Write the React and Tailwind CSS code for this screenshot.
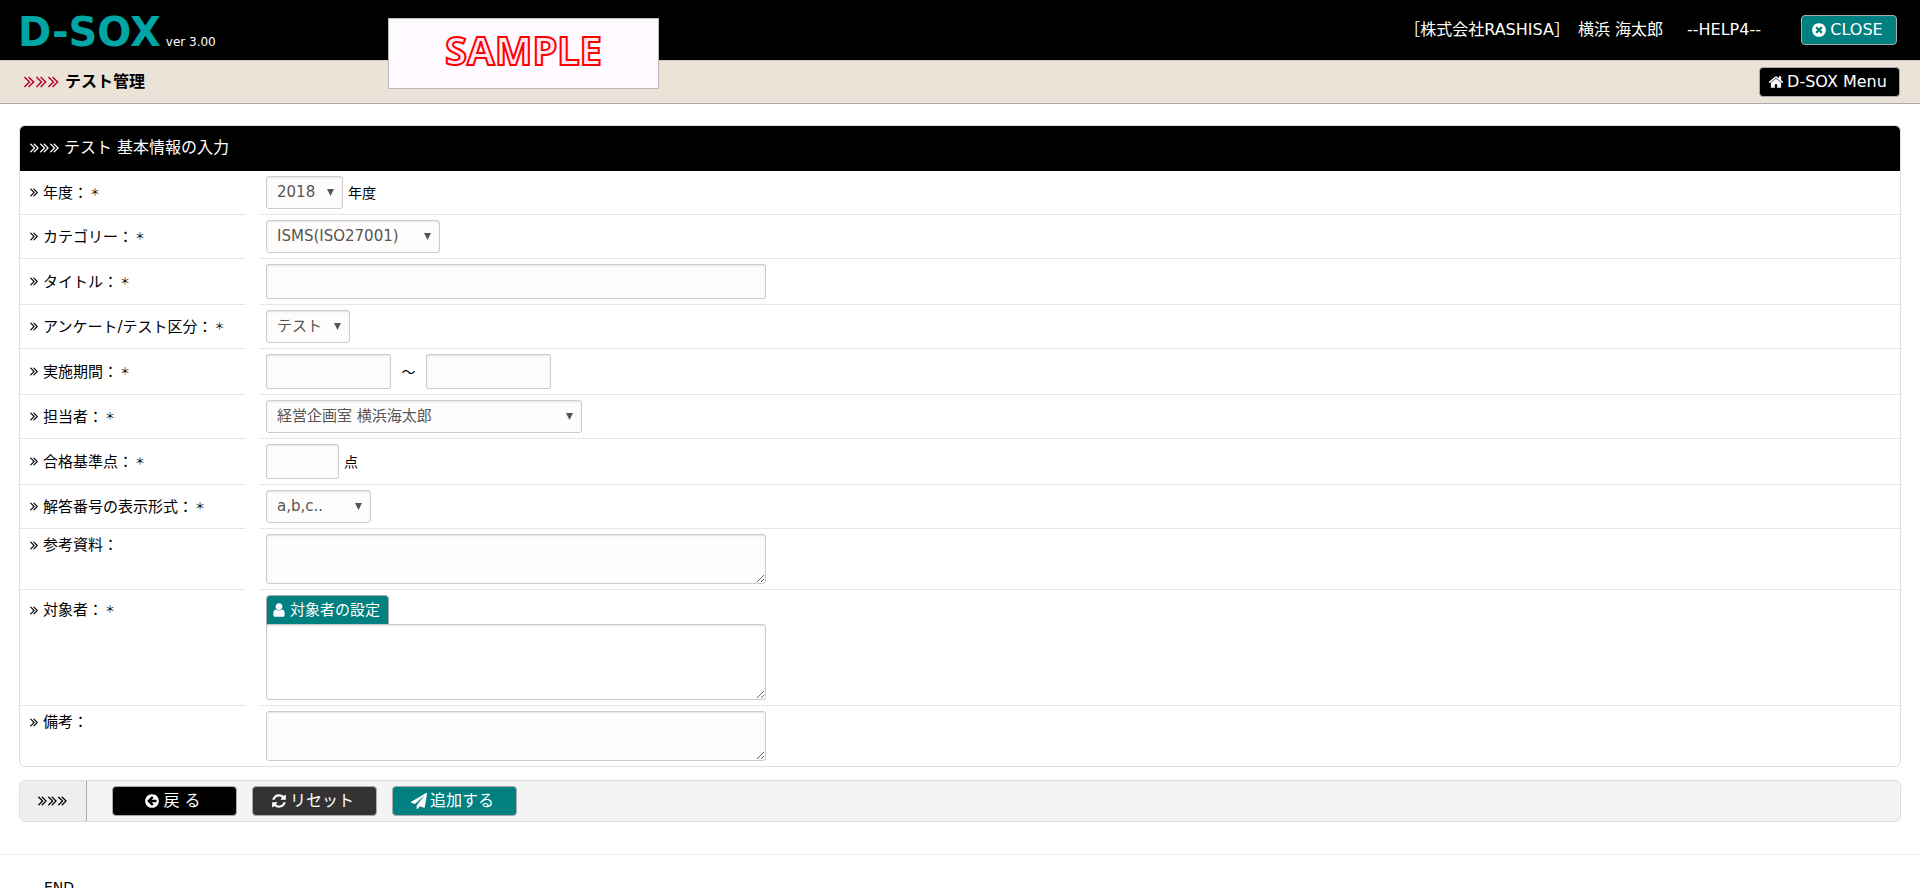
const ICONS = {
    angles: 'M979 960q0 13-10 23l-466 466q-10 10-23 10t-23-10l-50-50q-10-10-10-23t10-23l393-393-393-393q-10-10-10-23t10-23l50-50q10-10 23-10t23 10l466 466q10 10 10 23zm384 0q0 13-10 23l-466 466q-10 10-23 10t-23-10l-50-50q-10-10-10-23t10-23l393-393-393-393q-10-10-10-23t10-23l50-50q10-10 23-10t23 10l466 466q10 10 10 23z',
    close: 'M1277 1122q0-26-19-45l-181-181 181-181q19-19 19-45 0-27-19-46l-90-90q-19-19-46-19-26 0-45 19l-181 181-181-181q-19-19-45-19-27 0-46 19l-90 90q-19 19-19 46 0 26 19 45l181 181-181 181q-19 19-19 45 0 27 19 46l90 90q19 19 46 19 26 0 45-19l181-181 181 181q19 19 45 19 27 0 46-19l90-90q19-19 19-46zm387-226q0 209-103 385.5t-279.5 279.5-385.5 103-385.5-103-279.5-279.5-103-385.5 103-385.5 279.5-279.5 385.5-103 385.5 103 279.5 279.5 103 385.5z',
    home: 'M1472 992v480q0 26-19 45t-45 19h-384v-384h-256v384h-384q-26 0-45-19t-19-45v-480q0-1 .5-3t.5-3l575-474 575 474q1 2 1 6zm223-69l-62 74q-8 9-21 11h-3q-13 0-21-7l-692-577-692 577q-12 8-24 7-13-2-21-11l-62-74q-8-10-7-23.5t11-21.5l719-599q32-26 76-26t76 26l244 204v-195q0-14 9-23t23-9h192q14 0 23 9t9 23v408l219 182q10 8 11 21.5t-7 23.5z',
    refresh: 'M1639 1056q0 5-1 7-64 268-268 434.5t-478 166.5q-146 0-282.5-55t-243.5-157l-129 129q-19 19-45 19t-45-19-19-45v-448q0-26 19-45t45-19h448q26 0 45 19t19 45-19 45l-137 137q71 66 161 102t187 36q134 0 250-65t186-179q11-17 53-117 8-23 30-23h192q13 0 22.5 9.5t9.5 22.5zm25-800v448q0 26-19 45t-45 19h-448q-26 0-45-19t-19-45 19-45l138-138q-148-137-349-137-134 0-250 65t-186 179q-11 17-53 117-8 23-30 23h-199q-13 0-22.5-9.5t-9.5-22.5v-7q65-268 270-434.5t480-166.5q146 0 284 55.5t245 156.5l130-129q19-19 45-19t45 19 19 45z',
    send: 'M1764 11q33 24 27 64l-256 1536q-5 29-32 45-14 8-31 8-11 0-24-5l-453-185-242 295q-18 23-49 23-13 0-22-4-19-7-30.5-23.5t-11.5-36.5v-349l864-1059-1069 925-395-162q-37-14-40-55-2-40 32-59l1664-960q15-9 32-9 20 0 36 11z',
    back: 'M1408 960v-128q0-26-19-45t-45-19h-502l189-189q19-19 19-45t-19-45l-91-91q-18-18-45-18t-45 18l-362 362-91 91q-18 18-18 45t18 45l91 91 362 362q18 18 45 18t45-18l91-91q18-18 18-45t-18-45l-189-189h502q26 0 45-19t19-45zm256-64q0 209-103 385.5t-279.5 279.5-385.5 103-385.5-103-279.5-279.5-103-385.5 103-385.5 279.5-279.5 385.5-103 385.5 103 279.5 279.5 103 385.5z',
    user: 'M1536 1399q0 109-62.5 187t-150.5 78h-854q-88 0-150.5-78t-62.5-187q0-85 8.5-160.5t31.5-152 58.5-131 94-89 134.5-34.5q131 128 313 128t313-128q76 0 134.5 34.5t94 89 58.5 131 31.5 152 8.5 160.5zm-256-887q0 159-112.5 271.5t-271.5 112.5-271.5-112.5-112.5-271.5 112.5-271.5 271.5-112.5 271.5 112.5 112.5 271.5z',
};

const FIELD =
    'border border-[#ccc] bg-[#fffdfb] text-[15px] text-[#555] shadow-[inset_0_1px_2px_rgba(0,0,0,0.1)] focus:outline-none';

export default function App() {
    return (
        <div className="bg-white text-black font-['DejaVu_Sans','Noto_Sans_CJK_JP',sans-serif]">
            <Header />
            <TitleBar />
            <form className="mx-[19px] mt-[21px]" onSubmit={(e) => e.preventDefault()}>
                <TestPanel />
                <ActionBar />
            </form>
            <footer className="mt-8 border-t border-[#eee] pl-11 pt-[22px] text-sm">END</footer>
        </div>
    );
}

function Header() {
    return (
        <header className="relative flex h-[60px] items-center justify-between bg-black pl-[18px] pr-[23px] text-white">
            <div className="flex items-baseline gap-[5px] pt-1">
                <h1 className="text-[40px] leading-[56px] font-bold text-[#00a5a5]">D-SOX</h1>
                <span className="text-xs">ver 3.00</span>
            </div>
            <div className="absolute left-[388px] top-[18px] flex h-[71px] w-[271px] items-center justify-center border border-[#bbb] bg-[#fffaff]">
                <span className="pb-2 font-['Noto_Sans',sans-serif] text-[40px] leading-none font-bold text-[#fee8f4] [-webkit-text-stroke:2px_#f00]">
                    SAMPLE
                </span>
            </div>
            <div className="flex items-center text-base">
                <span>［株式会社RASHISA］</span>
                <span className="ml-2">横浜 海太郎</span>
                <span className="ml-6">--HELP4--</span>
                <Button icon="close" className="ml-10 w-24 rounded bg-[#008080]">
                    CLOSE
                </Button>
            </div>
        </header>
    );
}

function TitleBar() {
    return (
        <div className="flex h-11 items-center justify-between border-t border-b border-t-[#ccc] border-b-[#aaa] bg-[#ebe3d7] pl-6 pr-5">
            <h2 className="flex items-center gap-[5px] text-base font-bold">
                <Angles className="w-3 h-[14px] text-[#b03]" />
                テスト管理
            </h2>
            <Button icon="home" className="w-[141px] rounded bg-black">
                D-SOX Menu
            </Button>
        </div>
    );
}

function TestPanel() {
    return (
        <section className="overflow-hidden rounded-md border border-[#ddd]">
            <h3 className="flex h-[45px] items-center gap-1 bg-black pl-[10px] pb-[2px] text-base text-white">
                <Angles className="w-[10px] h-[14px]" />
                テスト 基本情報の入力
            </h3>
            <Row id="year" label="年度：" required>
                <Select id="year" options={['2018']} className="w-[77px]" />
                <span className="ml-[5px] text-sm">年度</span>
            </Row>
            <Row id="category" label="カテゴリー：" required>
                <Select id="category" options={['ISMS(ISO27001)']} className="w-[174px]" />
            </Row>
            <Row id="title" label="タイトル：" required>
                <TextBox id="title" className="w-[500px]" />
            </Row>
            <Row id="kind" label="アンケート/テスト区分：" required>
                <Select id="kind" options={['テスト']} className="w-[84px]" />
            </Row>
            <Row id="from" label="実施期間：" required>
                <TextBox id="from" className="w-[125px]" />
                <span className="w-[35px] text-center text-sm">～</span>
                <TextBox id="to" aria-label="終了日" className="w-[125px]" />
            </Row>
            <Row id="owner" label="担当者：" required>
                <Select id="owner" options={['経営企画室 横浜海太郎']} className="w-[316px]" />
            </Row>
            <Row id="score" label="合格基準点：" required>
                <TextBox id="score" className="w-[73px]" />
                <span className="ml-[5px] text-sm">点</span>
            </Row>
            <Row id="format" label="解答番号の表示形式：" required>
                <Select id="format" options={['a,b,c..']} className="w-[105px]" />
            </Row>
            <Row id="material" label="参考資料：" align="items-start pt-1">
                <TextArea id="material" className="h-[50px] bg-[#fffdfb]" />
            </Row>
            <Row id="target" label="対象者：" align="items-start pt-2" required>
                <div className="flex flex-col">
                    <Button icon="user" className="w-[123px] rounded-t text-[15px] bg-[#008080]">
                        対象者の設定
                    </Button>
                    <TextArea id="target" className="-mt-px h-[76px] bg-white" />
                </div>
            </Row>
            <Row id="note" label="備考：" align="items-start pt-1" last>
                <TextArea id="note" className="h-[50px] bg-[#fffdfb]" />
            </Row>
        </section>
    );
}

function ActionBar() {
    return (
        <div className="mt-[13px] flex h-[42px] items-center overflow-hidden rounded-md border border-[#ddd] bg-[#f4f4f4]">
            <div className="flex w-[67px] items-center justify-center self-stretch border-r border-[#aaa] bg-[#eee]">
                <Angles className="w-[10px] h-[14px]" />
            </div>
            <div className="ml-[25px] flex gap-[15px]">
                <Button icon="back" className="w-[125px] rounded bg-black">
                    戻 る
                </Button>
                <Button icon="refresh" type="reset" className="w-[125px] rounded bg-[#333]">
                    リセット
                </Button>
                <Button icon="send" type="submit" className="w-[125px] rounded bg-[#008080]">
                    追加する
                </Button>
            </div>
        </div>
    );
}

function Row({ id, label, align = 'items-center', required, last, children }) {
    return (
        <div className="grid grid-cols-[225px_1fr] gap-x-4">
            <div className={`flex pl-[10px] ${align} ${last ? '' : 'border-b border-dotted border-[#ccc]'}`}>
                <label htmlFor={id} className="flex items-center text-[15px] leading-6">
                    <Icon name="angles" viewBox="396 448 980 1024" className="mr-[5px] h-[9px] w-2" />
                    {label}
                    {required && <span className="ml-[2px] text-[10px]">＊</span>}
                </label>
            </div>
            <div className={`flex items-center p-[5px] ${last ? '' : 'border-b border-dotted border-[#ccc]'}`}>
                {children}
            </div>
        </div>
    );
}

function Select({ id, options, className }) {
    return (
        <div className={`relative ${className}`}>
            <select id={id} className={`${FIELD} block h-[33px] w-full appearance-none rounded-[3px] pl-[10px]`}>
                {options.map((option) => (
                    <option key={option}>{option}</option>
                ))}
            </select>
            <svg className="pointer-events-none absolute right-[9px] top-[13px] h-[7px] w-[7px]" viewBox="0 0 7 7" aria-hidden="true">
                <path d="M0 0h7L3.5 7z" fill="#555" />
            </svg>
        </div>
    );
}

function TextBox({ className, ...props }) {
    return <input type="text" {...props} className={`${FIELD} h-[35px] rounded-[2px] px-2 ${className}`} />;
}

function TextArea({ id, className }) {
    return (
        <textarea
            id={id}
            className={`block w-[500px] rounded-[3px] border border-[#ccc] px-2 text-[15px] text-[#555] shadow-[inset_0_1px_2px_rgba(0,0,0,0.1)] focus:outline-none ${className}`}
        />
    );
}

function Button({ icon, type = 'button', className, children }) {
    return (
        <button
            type={type}
            className={`flex h-[30px] items-center justify-center gap-[3px] border border-[#aaa] pr-1 text-white ${className}`}
        >
            <Icon name={icon} className="h-4 w-4" />
            {children}
        </button>
    );
}

// Three double chevrons in a row
function Angles({ className }) {
    return (
        <span className="flex">
            {[0, 1, 2].map((i) => (
                <Icon key={i} name="angles" viewBox="396 384 1100 1152" className={className} />
            ))}
        </span>
    );
}

function Icon({ name, viewBox = '0 0 1792 1792', className }) {
    return (
        <svg className={`shrink-0 ${className}`} viewBox={viewBox} fill="currentColor" aria-hidden="true">
            <path d={ICONS[name]} />
        </svg>
    );
}
